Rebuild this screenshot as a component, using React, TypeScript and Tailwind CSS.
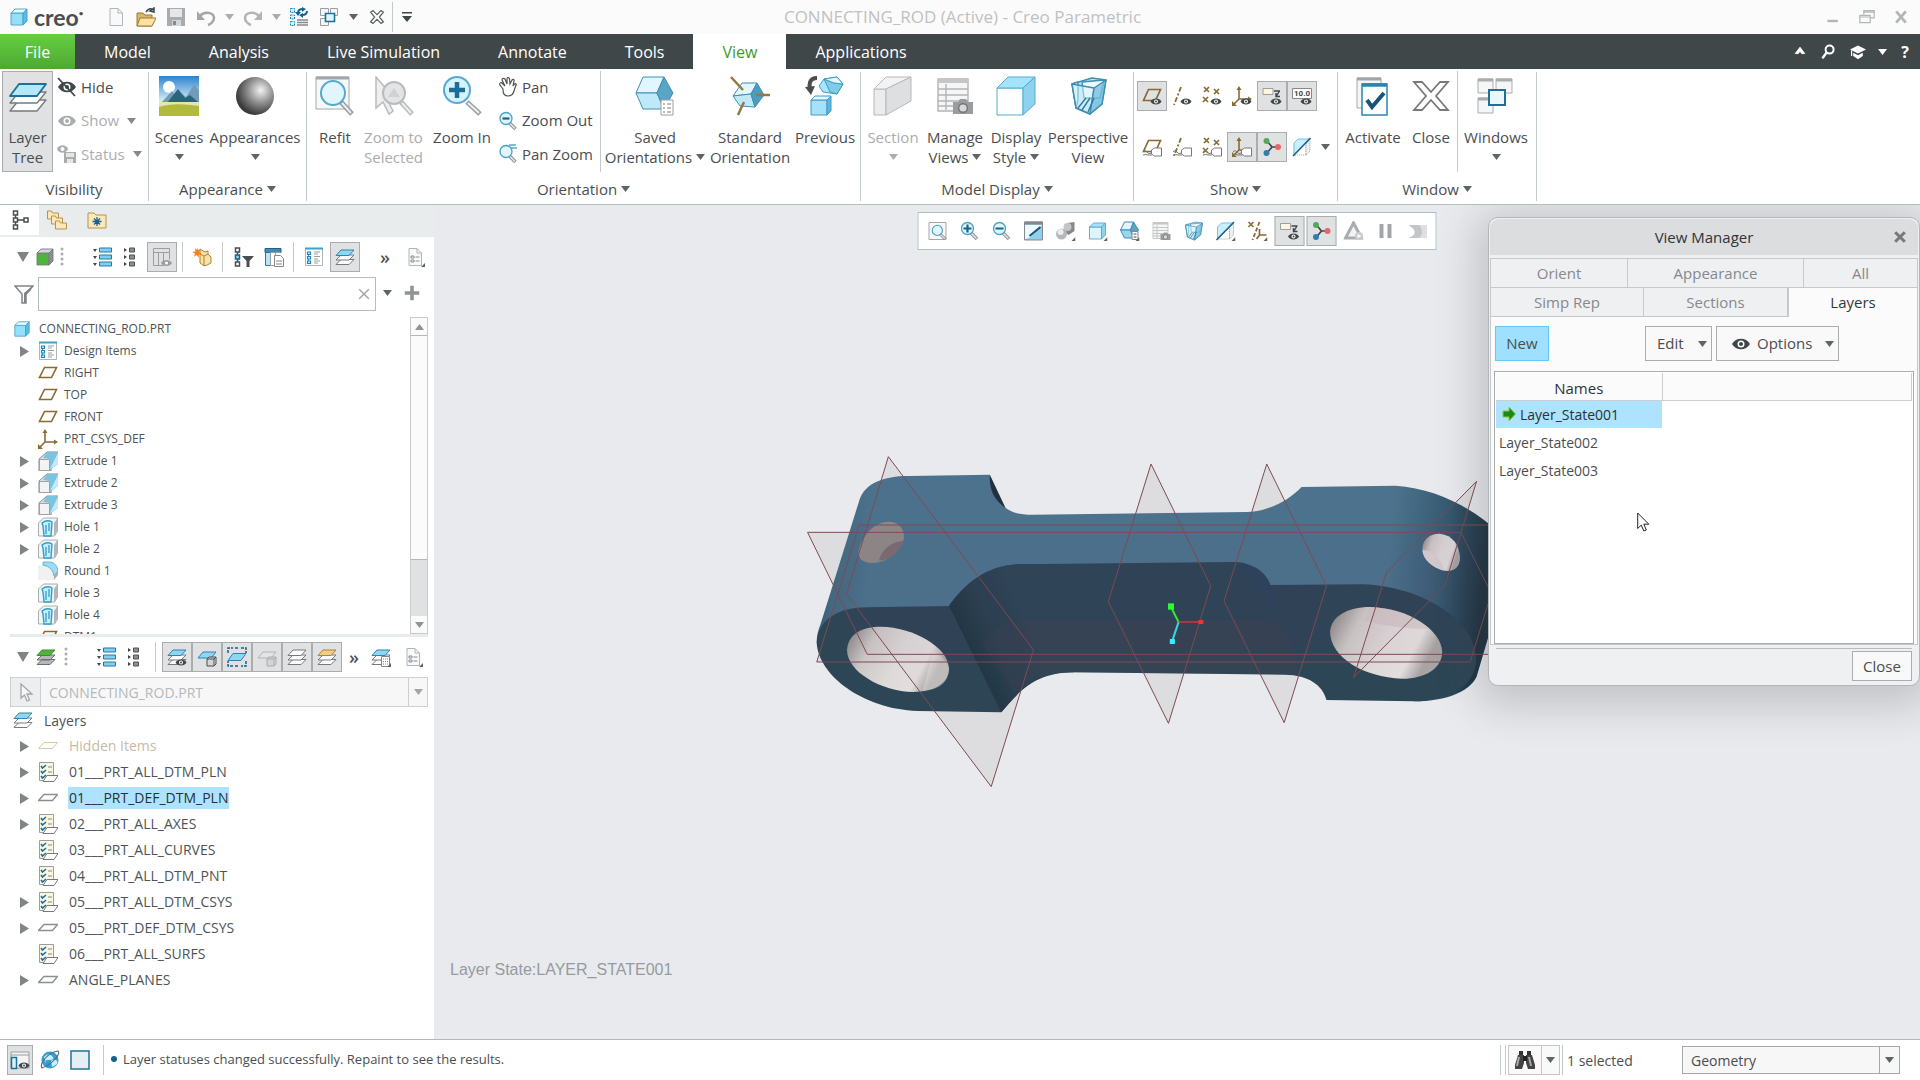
import React, { useState } from 'react';

type IconProps = { children?: React.ReactNode; box?: number; size?: string };

const Svg: React.FC<IconProps> = ({ children, box = 20, size = 'size-5' }) => (
  <svg className={`${size} shrink-0`} viewBox={`0 0 ${box} ${box}`} fill="none" aria-hidden="true">
    {children}
  </svg>
);

const Big: React.FC<{ children: React.ReactNode }> = ({ children }) => (
  <Svg box={40} size="size-10">{children}</Svg>
);

const Caret: React.FC<{ className?: string }> = ({ className = 'text-[#5f6467]' }) => (
  <svg className={`inline-block h-[6px] w-[9px] shrink-0 ${className}`} viewBox="0 0 9 6" fill="currentColor" aria-hidden="true">
    <path d="M0 0h9L4.500 6z" />
  </svg>
);

const SEP = 'w-px shrink-0 bg-[#c3cacb]';
const BROWN = '#8a6a33';

/* ---------- glyph parts shared by several icons ---------- */

const EyePart = () => (
  <g>
    <path d="M8.500 15.500c2-4 9-4 11 0-2 4-9 4-11 0z" fill="#3f4749" />
    <circle cx="14" cy="15.500" r="2" fill="#fff" />
    <circle cx="14" cy="15.500" r="1" fill="#3f4749" />
  </g>
);
const TagPart = () => (
  <g>
    <path d="M9.500 13l3-2h7v8h-7l-3-2z" fill="#fff" stroke="#77797b" />
    <path d="M1 15q2-3 4 0t4 1M1 18q3-1 5 0h4" stroke="#77797b" />
  </g>
);
const PlanePart = () => <path d="M6.500 3.500h12l-5 11H1.500z" stroke={BROWN} strokeWidth="1.700" />;
const AxisPart = () => <path d="M9 1L2 19" stroke={BROWN} strokeWidth="1.800" strokeDasharray="5 2 2 2" />;
const PointsPart = () => (
  <path d="M2 1l5 5m0-5L2 6M12 3l5 5m0-5l-5 5M1 11l5 5m0-5l-5 5" stroke={BROWN} strokeWidth="1.700" />
);
const CsysPart = () => (
  <g>
    <path d="M7 2v11h11M7 13l-5 5" stroke={BROWN} strokeWidth="1.600" />
    <path d="M4.500 4L7 0l2.500 4zM16 10.500l4 2.500-4 2.500zM0 15v5h5z" fill={BROWN} />
  </g>
);
const LensPart: React.FC<{ sign?: string }> = ({ sign }) => (
  <g>
    <path d="M11 11.500l6.500 6.500" stroke="#8e9294" strokeWidth="3.500" />
    <path d="M11.500 12l5.500 5.500" stroke="#e5e7e8" strokeWidth="1.500" />
    <circle cx="8" cy="7.500" r="6" fill="#e1f5fd" stroke="#4ba0c8" strokeWidth="1.300" />
    {sign && <path d={sign} stroke="#17628d" strokeWidth="2.200" />}
  </g>
);
const CubePart: React.FC<{ front?: string; top?: string; side?: string; line?: string }> = ({
  front = '#bdeaff', top = '#e3f7ff', side = '#58bde3', line = '#4b9ec2',
}) => (
  <g stroke={line} strokeWidth="0.900" strokeLinejoin="round">
    <path d="M2 6h12v12H2z" fill={front} />
    <path d="M2 6l4-4h12l-4 4z" fill={top} />
    <path d="M14 6l4-4v12l-4 4z" fill={side} />
  </g>
);
const LayersPart: React.FC<{ top?: string; line?: string }> = ({ top = '#8fd6f5', line = '#2f84ad' }) => (
  <g strokeLinejoin="round">
    <path d="M6 12.500h13l-5 5H1z" fill="#fff" stroke="#77797b" />
    <path d="M6 8h13l-5 5H1z" fill="#fff" stroke="#77797b" />
    <path d="M6 3h13l-5 5.500H1z" fill={top} stroke={line} />
  </g>
);
const SheetPart = () => (
  <g>
    <path d="M4 1.500h8l4.500 4.500v12.500H4z" fill="#f7f9fa" stroke="#b1b4b6" />
    <path d="M12 1.500v4.500h4.500" stroke="#b1b4b6" />
  </g>
);
const TrioPart = () => (
  <g>
    <path d="M5 4l5 6-5 6M10 10h6" stroke="#3f4749" strokeWidth="1.700" />
    <circle cx="4.500" cy="4" r="3" fill="#55a858" />
    <circle cx="16" cy="10" r="3" fill="#e8656b" />
    <circle cx="4.500" cy="16" r="3" fill="#2f7fae" />
  </g>
);
const ClipPart = () => (
  <g>
    <path d="M2 6h12v12H2z" stroke="#9da1a3" strokeDasharray="1 1" />
    <path d="M14 6l4-4v12l-4 4z" fill="#eceeef" stroke="#9da1a3" strokeDasharray="1 1" />
    <path d="M2 6l4-4h12L2 18z" fill="#c9effd" stroke="#74c4e6" />
    <path d="M1 19L18.500 1" stroke="#1b6089" strokeWidth="1.600" />
  </g>
);
const AnnotPart = () => (
  <g>
    <path d="M1 2.500h10v6H1z" fill="#fdf6df" stroke="#9b9fa1" />
    <path d="M12 5h6M17.500 5l-3 5M14 7v3.500h4" stroke="#3f4749" strokeWidth="1.400" />
  </g>
);
const TableCamPart = () => (
  <g>
    <path d="M1.500 1.500h15v16h-15z" fill="#f6f6f6" stroke="#b1b4b6" strokeWidth="0.700" />
    <path d="M1.500 1.500h15v2h-15z" fill="#c3c5c7" />
    <path d="M1.500 6.500h15M1.500 9.500h15M1.500 12.500h15M1.500 15h15M5.500 4v13" stroke="#b1b4b6" strokeWidth="0.700" />
    <path d="M9 13h2.500l1-1.500h3l1 1.500H19v6H9z" fill="#9a9d9f" />
    <circle cx="14" cy="16" r="2.200" fill="#d6d8d9" stroke="#77797b" strokeWidth="0.800" />
  </g>
);
const PerspPart = () => (
  <g stroke="#3f8fb5" strokeLinejoin="round" strokeWidth="0.700">
    <path d="M2 4l10-3 7 1-2 12-6 5-7-3z" fill="#bfe6f5" />
    <path d="M2 4l3-1v9l-1 4z" fill="#d8f2fb" />
    <path d="M7 3l11-1-2 9H8z" fill="#eef9fd" />
    <path d="M2 4l11 2-2 13-7-3z" fill="#d8f2fb" fillOpacity=".5" />
    <path d="M13 6l6-4-2 12-6 5z" fill="#79bedd" fillOpacity=".8" />
    <path d="M5 16l4-5M7 17l4-6M10 18l3-7" stroke="#2f7ba0" />
  </g>
);
const BlueList = () => (
  <Svg>
    {[1, 8, 15].map(y => (
      <g key={y}>
        <path d={`M1 ${y + 1}h4l-2 3z`} fill="#3f4749" />
        <path d={`M7.500 ${y}h12v4h-12z`} fill="#7fd0f3" stroke="#27789f" />
      </g>
    ))}
  </Svg>
);
const GreyList = () => (
  <Svg>
    {[1, 8, 15].map(y => (
      <g key={y}>
        <path d={`M4 ${y}l3 2-3 2z`} fill="#3f4749" />
        <path d={`M9.500 ${y}h5v4h-5z`} fill="#8c9092" stroke="#4d5254" />
      </g>
    ))}
  </Svg>
);
const ItemListPart = () => (
  <g>
    <path d="M1.500 1.500h17v17h-17z" fill="#fff" stroke="#b1b4b6" />
    <path d="M1 1.500h18" stroke="#3f9fcd" strokeWidth="2" />
    <path d="M4.500 5v11" stroke="#2f94c9" />
    <path d="M3.500 5h3v2.500h-3zM3.500 9.500h3V12h-3zM3.500 14h3v2.500h-3z" fill="#d4f1ff" stroke="#1a86c0" strokeWidth="1.200" />
    <path d="M10 5h6M10 7h4M10 9.500h6M10 12h4M10 14h6M10 16h4" stroke="#9a9ea0" />
  </g>
);
const Dots = () => (
  <svg className="h-5 w-[14px]" viewBox="0 0 14 20" fill="#a9adaf" aria-hidden="true">
    <circle cx="7" cy="2" r="1.500" /><circle cx="7" cy="7" r="1.500" /><circle cx="7" cy="12" r="1.500" /><circle cx="7" cy="17" r="1.500" />
  </svg>
);
const EyeIcon: React.FC<{ color?: string; slashed?: boolean }> = ({ color = '#3f4749', slashed }) => (
  <Svg>
    <path d="M1 10c4-7 14-7 18 0-4 7-14 7-18 0z" fill={color} />
    <circle cx="10" cy="10" r="3.500" fill="#fff" />
    <circle cx="10" cy="10" r="2" fill={color} />
    {slashed && <path d="M1 1l17 18" stroke="#3f4749" strokeWidth="1.800" />}
  </Svg>
);
const Corner = () => <path d="M20 16v4h-4z" fill="#5f6467" />;
const WindowsPart = () => (
  <g stroke="#9a9ea0">
    <path d="M1.500 1.500h8v7h-8zM11.500 1.500h7v7h-7zM1.500 11.500h8v7h-8z" fill="#f5f6f7" />
    <path d="M6.500 6.500h9v8h-9z" fill="#e2f5fd" stroke="#1f7099" strokeWidth="1.600" />
  </g>
);

/* ---------- buttons ---------- */

interface ToolProps {
  label: string;
  children: React.ReactNode;
  active?: boolean;
  width?: string;
}

const Tool: React.FC<ToolProps> = ({ label, children, active, width = 'w-[30px]' }) => (
  <button
    type="button"
    aria-label={label}
    aria-pressed={active}
    className={`flex h-[30px] shrink-0 items-center justify-center ${width} ${active ? 'border border-[#a9adaf] bg-[#dfe1e3]' : ''}`}
  >
    {children}
  </button>
);

interface RibbonButtonProps {
  icon: React.ReactNode;
  lines: string[];
  width: string;
  caret?: boolean;
  disabled?: boolean;
  active?: boolean;
}

const RibbonButton: React.FC<RibbonButtonProps> = ({ icon, lines, width, caret, disabled, active }) => (
  <button
    type="button"
    disabled={disabled}
    className={`flex shrink-0 flex-col items-center border pt-1 leading-5 whitespace-nowrap ${width} ${active ? 'border-[#a9adaf] bg-[#dfe1e3]' : 'border-transparent'} ${disabled ? 'text-[#aaadaf]' : ''}`}
  >
    <span className="mb-[11px]">{icon}</span>
    <span>{lines[0]}</span>
    <span className="flex h-5 items-center gap-1">
      {lines[1]}
      {caret && <Caret className={disabled ? 'text-[#aaadaf]' : undefined} />}
    </span>
  </button>
);

const SmallRibbonButton: React.FC<{ icon: React.ReactNode; label: string; caret?: boolean; disabled?: boolean }> = ({ icon, label, caret, disabled }) => (
  <button type="button" disabled={disabled} className={`flex h-[34px] items-center gap-1 pb-0.5 whitespace-nowrap ${disabled ? 'text-[#aaadaf]' : ''}`}>
    {icon}
    <span>{label}</span>
    {caret && <Caret className="ml-1 text-[#85898b]" />}
  </button>
);

const RibbonGroup: React.FC<{ label: string; caret?: boolean; width: string; children: React.ReactNode }> = ({ label, caret, width, children }) => (
  <>
    <section aria-label={label} className={`flex shrink-0 flex-col pt-[2px] ${width}`}>
      <div className="flex h-[101px] px-[2px]">{children}</div>
      <div className="flex h-8 items-center justify-center gap-1 pt-0.5">
        {label}
        {caret && <Caret />}
      </div>
    </section>
    <div className={`${SEP} my-[3px]`} />
  </>
);

/* ---------- title bar and tabs ---------- */

const TitleBar = () => (
  <header className="flex h-[34px] shrink-0 items-center bg-[#fbfbfb]">
    <div className="flex flex-1 items-center pl-[9px]">
      <Svg><CubePart front="#93e0fb" /></Svg>
      <span className="ml-[5px] flex w-[67px] font-[Lato,sans-serif] text-[23px] leading-7 font-bold text-[#4a4e50]">
        creo<span className="mt-1 text-[8px] leading-3">•</span>
      </span>
      <Tool label="New"><Svg><SheetPart /></Svg></Tool>
      <Tool label="Open">
        <Svg>
          <path d="M1 6h6l2 2h7v11H1z" fill="#dcb566" stroke="#a07b34" />
          <path d="M4 11h16l-4 8H1z" fill="#fbe1a3" stroke="#a07b34" />
          <path d="M10 5q3-5 7-2M14 4l4 1V1z" stroke="#3f4749" strokeWidth="1.500" />
        </Svg>
      </Tool>
      <Tool label="Save">
        <Svg>
          <path d="M1 1h18v18H1z" fill="#a9acae" />
          <path d="M4 2h12v8H4z" fill="#e6e7e8" />
          <path d="M6 13h9v6H6z" fill="#d3d5d6" />
          <path d="M7 14h3v4H7z" fill="#85898b" />
        </Svg>
      </Tool>
      <Tool label="Undo">
        <Svg>
          <path d="M4 9c4-5 14-4 14 2 0 3-3 6-6 7" stroke="#a3a6a8" strokeWidth="2.500" />
          <path d="M1 4v9h8z" fill="#a3a6a8" />
        </Svg>
      </Tool>
      <Tool label="Undo list" width="w-4"><Caret className="text-[#a9adaf]" /></Tool>
      <Tool label="Redo" width="w-8">
        <Svg>
          <path d="M16 9C12 4 2 5 2 11c0 3 3 6 6 7" stroke="#b1b4b6" strokeWidth="2.500" />
          <path d="M19 4v9h-8z" fill="#b1b4b6" />
        </Svg>
      </Tool>
      <Tool label="Redo list" width="w-[15px]"><Caret className="text-[#a9adaf]" /></Tool>
      <Tool label="Regenerate">
        <Svg>
          <path d="M1.500 1.500h4v4h-4zM1.500 8h4v4h-4zM1.500 14.500h4v4h-4z" fill="#d4f1ff" stroke="#1a86c0" strokeDasharray="2 1" />
          <path d="M9 6q0-4 5-4M18 4q0 4-5 4" stroke="#17628d" strokeWidth="2" />
          <path d="M13 0l4 2-4 3zM14 6l-4 2 4 3zM6 5h6l-3 4z" fill="#17628d" />
          <path d="M8 13h11M8 15.500h11M8 18h11" stroke="#85898b" strokeWidth="1.300" />
        </Svg>
      </Tool>
      <Tool label="Windows"><Svg><WindowsPart /></Svg></Tool>
      <Tool label="Windows list" width="w-[18px]"><Caret /></Tool>
      <Tool label="Close window">
        <Svg size="size-4">
          <path d="M2 4l3-2 5 5 5-5 3 2-5 6 5 6-3 2-5-5-5 5-3-2 5-6z" stroke="#5f6467" strokeWidth="1.600" fill="#fff" />
        </Svg>
      </Tool>
      <div className={`${SEP} h-[30px]`} />
      <Tool label="Customize toolbar" width="w-7">
        <svg className="h-[10px] w-[10px]" viewBox="0 0 10 10" fill="#3f4749"><path d="M0 0h10v1.500H0zM0 4h10l-5 6z" /></svg>
      </Tool>
    </div>
    <h1 className="text-[17px] text-[#bfc1c2]">CONNECTING_ROD (Active) - Creo Parametric</h1>
    <div className="flex flex-1 items-center justify-end gap-1 pr-1 text-[#b3b6b8]">
      <Tool label="Minimize"><Svg size="size-4"><path d="M3 15h13" stroke="currentColor" strokeWidth="3" /></Svg></Tool>
      <Tool label="Restore">
        <Svg size="size-4"><path d="M6 7V2h13v9h-5M1 8h13v9H1zM1 10h13M6 4h13" stroke="currentColor" strokeWidth="1.500" /></Svg>
      </Tool>
      <Tool label="Exit"><Svg size="size-4"><path d="M4 3l12 14M16 3L4 17" stroke="currentColor" strokeWidth="3.500" /></Svg></Tool>
    </div>
  </header>
);

const tabs = ['Model', 'Analysis', 'Live Simulation', 'Annotate', 'Tools', 'View', 'Applications'];

const MenuBar = () => {
  const [current, setCurrent] = useState('View');
  return (
    <nav className="flex h-[35px] shrink-0 bg-[#3f4749] text-[16px] text-white">
      <button type="button" className="w-[75px] bg-linear-to-b from-[#64cf40] to-[#4ea834]">File</button>
      {tabs.map(tab => (
        <button
          key={tab}
          type="button"
          onClick={() => setCurrent(tab)}
          className={`px-[29px] whitespace-nowrap ${current === tab ? 'bg-white text-[#3f9a2b]' : ''}`}
        >
          {tab}
        </button>
      ))}
      <div className="ml-auto flex items-center">
        <Tool label="Minimize ribbon" width="w-7"><Svg size="size-4"><path d="M4 12l6-8 6 8h-4l-2-3-2 3z" fill="#fff" stroke="#fff" /></Svg></Tool>
        <Tool label="Search" width="w-7">
          <Svg size="size-4"><circle cx="12" cy="7" r="5" stroke="#fff" strokeWidth="2.500" /><path d="M8 11l-5 7" stroke="#fff" strokeWidth="3" /></Svg>
        </Tool>
        <Tool label="Learning" width="w-8">
          <Svg size="size-4">
            <path d="M0 7l10-5 10 5-10 5z" fill="#fff" />
            <path d="M4 11l6 3 6-3v4l-6 4-6-4z" fill="#fff" /><path d="M2 8v7" stroke="#fff" strokeWidth="1.500" />
          </Svg>
        </Tool>
        <Tool label="Learning list" width="w-4"><Caret className="text-white" /></Tool>
        <Tool label="Help"><b>?</b></Tool>
      </div>
    </nav>
  );
};

/* ---------- ribbon ---------- */

const Ribbon = () => (
  <div className="flex h-[136px] shrink-0 overflow-hidden border-b border-[#b0bfbf] bg-white text-[15px] text-[#4a4e50]">
    <RibbonGroup label="Visibility" width="w-[148px]">
      <RibbonButton
        active
        width="w-[51px]"
        lines={['Layer', 'Tree']}
        icon={<Big>
          <g strokeLinejoin="round">
            <path d="M11 24h27l-9 11H2z" fill="#fff" stroke="#77797b" strokeWidth="1.300" />
            <path d="M11 16h27l-9 11H2z" fill="#fff" stroke="#77797b" strokeWidth="1.300" />
            <path d="M11 8h27l-9 12H2z" fill="#b7e6f9" stroke="#1f7099" strokeWidth="1.800" />
          </g>
        </Big>}
      />
      <div className="ml-1 flex flex-col">
        <SmallRibbonButton label="Hide" icon={<EyeIcon slashed />} />
        <SmallRibbonButton label="Show" caret disabled icon={<EyeIcon color="#a9adaf" />} />
        <SmallRibbonButton
          label="Status"
          caret
          disabled
          icon={<Svg>
            <path d="M0 5c2-5 9-5 11 0-2 5-9 5-11 0z" fill="#a9adaf" /><circle cx="5.500" cy="5" r="2" fill="#fff" />
            <path d="M7 8h12v11H7z" fill="#a9adaf" /><path d="M9 9h8v4H9zM10 15h6v4h-6z" fill="#e5e6e7" />
          </Svg>}
        />
      </div>
    </RibbonGroup>

    <RibbonGroup label="Appearance" caret width="w-[157px]">
      <RibbonButton
        caret
        width="w-[56px]"
        lines={['Scenes']}
        icon={<Big>
          <defs>
            <linearGradient id="sky" x2="0" y2="1"><stop stopColor="#2d83cf" /><stop offset=".6" stopColor="#cfe9f5" /></linearGradient>
          </defs>
          <path d="M0 0h40v40H0z" fill="url(#sky)" />
          <circle cx="10" cy="11" r="6" fill="#fff" />
          <path d="M2 27l11-12 4 5 4-4 6 5 8-12 5 5v14z" fill="#6f9cb6" />
          <path d="M8 27l11-14 7 9 5-3 9 8z" fill="#2d637f" />
          <path d="M0 26h40v14H0z" fill="#e4e5b0" />
          <path d="M0 31q15-5 40-1v10H0z" fill="#b1ba3c" />
        </Big>}
      />
      <RibbonButton
        caret
        width="w-[96px]"
        lines={['Appearances']}
        icon={<Big>
          <defs>
            <radialGradient id="ball" cx=".65" cy=".35" r=".65"><stop stopColor="#f3f3f3" /><stop offset=".5" stopColor="#929292" /><stop offset="1" stopColor="#3a3a3a" /></radialGradient>
          </defs>
          <circle cx="20" cy="20" r="19" fill="url(#ball)" />
        </Big>}
      />
    </RibbonGroup>

    <RibbonGroup label="Orientation" caret width="w-[553px]">
      <RibbonButton
        width="w-[52px]"
        lines={['Refit']}
        icon={<Big>
          <path d="M1 1h33v32H1z" fill="#f7f8f9" stroke="#a3a6a8" /><path d="M1 2h33" stroke="#a3a6a8" strokeWidth="3" />
          <path d="M26 26l11 12" stroke="#999da0" strokeWidth="5" /><path d="M27 27l9 10" stroke="#eceeef" strokeWidth="2" />
          <circle cx="18" cy="17" r="12" fill="#e1f5fd" stroke="#57aacf" strokeWidth="2" />
        </Big>}
      />
      <RibbonButton
        disabled
        width="w-[65px]"
        lines={['Zoom to', 'Selected']}
        icon={<Big>
          <path d="M2 1v31l7-6 6 12 4-3-5-10h9z" fill="#eee" stroke="#bbb" strokeWidth="1.500" />
          <path d="M27 26l11 12" stroke="#b9bbbd" strokeWidth="5" /><path d="M28 27l9 10" stroke="#eceeef" strokeWidth="2" />
          <circle cx="20" cy="17" r="11" fill="#e3e4e5" stroke="#b9bbbd" strokeWidth="2" /><path d="M14 21l6-9 6 9z" fill="#cfd1d2" />
        </Big>}
      />
      <RibbonButton
        width="w-[72px]"
        lines={['Zoom In']}
        icon={<Big>
          <path d="M25 26l13 12" stroke="#999da0" strokeWidth="5" /><path d="M26 27l11 10" stroke="#eceeef" strokeWidth="2" />
          <circle cx="15" cy="14" r="13" fill="#d8f2fc" stroke="#57aacf" strokeWidth="2" />
          <path d="M15 6v16M7 14h16" stroke="#1b6c98" strokeWidth="4.500" />
        </Big>}
      />
      <div className="flex flex-1 flex-col">
        <SmallRibbonButton
          label="Pan"
          icon={<Svg>
            <path d="M5 12L2 8c-1-2 1-3 2-2l3 3-3-6c0-2 2-2 3-1l2 5V2c0-2 2-2 2.500 0l.5 5 2-4c1-1 2.500-.5 2 1l-1 5 1.500-2c1-1 2 0 1.500 1l-2 6c-1 4-3 5-6 5-4 0-5-3-5-6z" fill="#fff" stroke="#4d5254" strokeWidth="1.200" />
          </Svg>}
        />
        <SmallRibbonButton label="Zoom Out" icon={<Svg><LensPart sign="M4.500 7.500h7" /></Svg>} />
        <SmallRibbonButton label="Pan Zoom" icon={<Svg><LensPart /><path d="M11 1h7M13 4h6" stroke="#57aacf" strokeWidth="1.500" /></Svg>} />
      </div>
      <div className={`${SEP} mx-px`} />
      <RibbonButton
        caret
        width="w-[106px]"
        lines={['Saved', 'Orientations']}
        icon={<Big>
          <g stroke="#3f8fb5" strokeLinejoin="round">
            <path d="M8 1h21L22 17H1z" fill="#e1f6fe" /><path d="M1 17h21l7 16H8z" fill="#bfe9f9" /><path d="M29 1l9 16-9 16-7-16z" fill="#5aa4c6" />
          </g>
          <path d="M26 24h12v15H26z" fill="#fff" stroke="#9a9ea0" /><path d="M28 28h2M32 28h4M28 32h2M32 32h4M28 36h2M32 36h4" stroke="#77797b" />
        </Big>}
      />
      <RibbonButton
        width="w-[84px]"
        lines={['Standard', 'Orientation']}
        icon={<Big>
          <g stroke="#3f8fb5" strokeLinejoin="round">
            <path d="M12 7h15l-6 11-18 2z" fill="#e1f6fe" /><path d="M3 20l18-2 4 13-15-1z" fill="#bfe9f9" /><path d="M27 7l7 12-9 12-4-13z" fill="#4c9bc0" />
          </g>
          <path d="M1 1l12 13M26 19h14M14 26L8 39" stroke="#9a783b" strokeWidth="2.500" />
        </Big>}
      />
      <RibbonButton
        width="w-[66px]"
        lines={['Previous']}
        icon={<Big>
          <path d="M12 2C4 2 4 9 5 13" stroke="#4a4e50" strokeWidth="4" /><path d="M0 11l10-1-4 9z" fill="#4a4e50" />
          <g stroke="#3f9cc4" strokeLinejoin="round">
            <path d="M19 3l13-2 6 7-6 10-14-2-4-6z" fill="#aee4fa" /><path d="M19 3l10 4 9 1-6 10-7-2z" fill="#7fcbe8" /><path d="M19 3l13-2 6 7-9-1z" fill="#e1f6fe" />
            <path d="M6 24h16v15H6z" fill="#a5e1fa" /><path d="M6 24l4-4h16l-4 4z" fill="#e1f6fe" /><path d="M22 24l4-4v15l-4 4z" fill="#5db7dc" />
          </g>
        </Big>}
      />
    </RibbonGroup>

    <RibbonGroup label="Model Display" caret width="w-[272px]">
      <RibbonButton
        caret
        disabled
        width="w-[60px]"
        lines={['Section']}
        icon={<Big>
          <g stroke="#b5b8ba" strokeLinejoin="round">
            <path d="M1 13h12v26H1z" fill="#ececec" /><path d="M1 13L13 1h25L13 13z" fill="#f3f3f3" /><path d="M13 13L38 1v24L13 39z" fill="#dedfe0" />
          </g>
        </Big>}
      />
      <RibbonButton
        caret
        width="w-[64px]"
        lines={['Manage', 'Views']}
        icon={<Svg size="size-10"><TableCamPart /></Svg>}
      />
      <RibbonButton
        caret
        width="w-[58px]"
        lines={['Display', 'Style']}
        icon={<Big>
          <g stroke="#57aacf" strokeLinejoin="round">
            <path d="M1 12h26v27H1z" fill="#fff" /><path d="M1 12L12 1h27L27 12z" fill="#a5e3fb" /><path d="M27 12L39 1v27L27 39z" fill="#8dd3f0" />
          </g>
        </Big>}
      />
      <RibbonButton width="w-[86px]" lines={['Perspective', 'View']} icon={<Svg size="size-10"><PerspPart /></Svg>} />
    </RibbonGroup>

    <RibbonGroup label="Show" caret width="w-[203px]">
      <div className="flex flex-col gap-[21px] pt-[10px] pl-px">
        <div className="flex">
          <Tool label="Plane display" active><Svg><PlanePart /><EyePart /></Svg></Tool>
          <Tool label="Axis display"><Svg><AxisPart /><EyePart /></Svg></Tool>
          <Tool label="Point display"><Svg><PointsPart /><EyePart /></Svg></Tool>
          <Tool label="Csys display"><Svg><CsysPart /><EyePart /></Svg></Tool>
          <Tool label="Annotation display" active><Svg><AnnotPart /><EyePart /></Svg></Tool>
          <Tool label="Dimension display" active>
            <Svg>
              <path d="M.5 2.500h19v10H.5z" fill="#fff" stroke="#85898b" />
              <text x="2" y="10" fontSize="8" fontWeight="bold" fill="#3f4749" fontFamily="Roboto, sans-serif">10.0</text>
              <EyePart />
            </Svg>
          </Tool>
        </div>
        <div className="flex">
          <Tool label="Plane tags"><Svg><PlanePart /><TagPart /></Svg></Tool>
          <Tool label="Axis tags"><Svg><AxisPart /><TagPart /></Svg></Tool>
          <Tool label="Point tags"><Svg><PointsPart /><TagPart /></Svg></Tool>
          <Tool label="Csys tags" active><Svg><CsysPart /><TagPart /></Svg></Tool>
          <Tool label="Spin center" active><Svg><TrioPart /></Svg></Tool>
          <Tool label="Clipping"><Svg><ClipPart /></Svg></Tool>
          <Tool label="More display options" width="w-4"><Caret /></Tool>
        </div>
      </div>
    </RibbonGroup>

    <RibbonGroup label="Window" caret width="w-[198px]">
      <RibbonButton
        width="w-[66px]"
        lines={['Activate']}
        icon={<Big>
          <path d="M4 2h24v30H4z" fill="#f5f6f7" stroke="#a3a6a8" /><path d="M4 3h24" stroke="#a3a6a8" strokeWidth="3" />
          <path d="M9 8h25v31H9z" fill="#fff" stroke="#2f84ad" strokeWidth="1.500" /><path d="M9 9h25" stroke="#2f84ad" strokeWidth="3.500" />
          <path d="M14 24l5 7 12-14" stroke="#17547b" strokeWidth="4" />
        </Big>}
      />
      <RibbonButton
        width="w-[50px]"
        lines={['Close']}
        icon={<Big>
          <path d="M3 6h8l9 10 9-10h8L25 20l12 14h-8l-9-10-9 10H3l12-14z" fill="#fff" stroke="#77797b" strokeWidth="1.800" />
        </Big>}
      />
      <div className={`${SEP} ml-px`} />
      <RibbonButton
        caret
        width="w-[76px]"
        lines={['Windows']}
        icon={<Big>
          <g fill="#f5f6f7" stroke="#a9adaf">
            <path d="M2 3h15v14H2zM20 3h16v14H20zM2 22h15v15H2z" />
            <path d="M2 4h15M20 4h16M2 23h15" strokeWidth="3" />
          </g>
          <path d="M13 14h16v15H13z" fill="#e9f7fc" stroke="#1f7099" strokeWidth="2" />
        </Big>}
      />
    </RibbonGroup>
  </div>
);

/* ---------- navigator ---------- */

const Arrow = () => (
  <svg className="h-[11px] w-[9px]" viewBox="0 0 9 11" fill="#808487" aria-hidden="true"><path d="M0 0l9 5.500L0 11z" /></svg>
);

const planeIcon = <Svg><path d="M6.500 4.500h12l-5 10H1.500z" stroke={BROWN} strokeWidth="1.600" /></Svg>;
const extrudeIcon = (
  <Svg>
    <path d="M1 8l8-7h11l-7 8v11H1z" fill="#dfe3e5" stroke="#85898b" />
    <path d="M5 7l4-6h11v12l-8 6V8z" fill="#7cc3e0" /><path d="M12 18l8-16v11z" fill="#c5e9f6" />
    <path d="M1.500 8.500h10v11h-10z" fill="#f3f3f4" stroke="#a0a3a5" />
  </Svg>
);
const holeIcon = (
  <Svg>
    <path d="M.5 6l5-5h14v13l-3 5H.5z" fill="#f3f4f5" stroke="#a9adaf" />
    <path d="M16 6l3.500-5v13L16 19z" fill="#b3b7b9" />
    <path d="M4 6q5-4 10-1l-1 14H6L5 9z" fill="#c5edfb" stroke="#2f9fce" strokeWidth="1.400" />
    <path d="M8 8v9M11 6v8" stroke="#2f9fce" strokeWidth="1.300" />
  </Svg>
);

interface TreeItem { name: string; icon: React.ReactNode; expandable?: boolean; muted?: boolean; selected?: boolean }

const modelItems: TreeItem[] = [
  { name: 'Design Items', icon: <Svg><ItemListPart /></Svg>, expandable: true },
  { name: 'RIGHT', icon: planeIcon },
  { name: 'TOP', icon: planeIcon },
  { name: 'FRONT', icon: planeIcon },
  { name: 'PRT_CSYS_DEF', icon: <Svg><CsysPart /></Svg> },
  { name: 'Extrude 1', icon: extrudeIcon, expandable: true },
  { name: 'Extrude 2', icon: extrudeIcon, expandable: true },
  { name: 'Extrude 3', icon: extrudeIcon, expandable: true },
  { name: 'Hole 1', icon: holeIcon, expandable: true },
  { name: 'Hole 2', icon: holeIcon, expandable: true },
  {
    name: 'Round 1',
    icon: <Svg><path d="M0 4h9c6 1 7 7 7 15H0z" fill="#f0f1f2" /><path d="M5 1h7q7 1 8 9l-4 5Q15 6 5 4z" fill="#9adcf5" stroke="#62b7da" /><path d="M16 14l4-4v4l-4 5z" fill="#a9adaf" /></Svg>,
  },
  { name: 'Hole 3', icon: holeIcon },
  { name: 'Hole 4', icon: holeIcon },
  { name: 'DTM1', icon: planeIcon },
];

const ruleIcon = (
  <Svg>
    <path d="M1.500 .5h14v18h-14z" fill="#fdf6df" stroke="#9a9ea0" />
    <path d="M3 4l1.500 2L8 3M3 9l1.500 2L8 8M3 14l1.500 2L8 13" stroke="#1a6fa0" strokeWidth="1.600" />
    <path d="M10 5h4M10 10h4" stroke="#a9adaf" strokeWidth="1.300" />
    <path d="M9 13.500h11l-4 6H5z" fill="#fff" stroke="#77797b" />
  </Svg>
);
const layerIcon = <Svg><path d="M6 6.500h13.500l-5 6H.5z" fill="#fff" stroke="#8a8e90" strokeWidth="1.300" /></Svg>;

const layerItems: TreeItem[] = [
  { name: 'Hidden Items', icon: <Svg><path d="M6 6.500h13.500l-5 6H.5z" fill="#fffdf6" stroke="#d0c8b4" /></Svg>, expandable: true, muted: true },
  { name: '01___PRT_ALL_DTM_PLN', icon: ruleIcon, expandable: true },
  { name: '01___PRT_DEF_DTM_PLN', icon: layerIcon, expandable: true, selected: true },
  { name: '02___PRT_ALL_AXES', icon: ruleIcon, expandable: true },
  { name: '03___PRT_ALL_CURVES', icon: ruleIcon },
  { name: '04___PRT_ALL_DTM_PNT', icon: ruleIcon },
  { name: '05___PRT_ALL_DTM_CSYS', icon: ruleIcon, expandable: true },
  { name: '05___PRT_DEF_DTM_CSYS', icon: layerIcon, expandable: true },
  { name: '06___PRT_ALL_SURFS', icon: ruleIcon },
  { name: 'ANGLE_PLANES', icon: layerIcon, expandable: true },
];

const NavTabs = () => (
  <div className="flex h-8 shrink-0 bg-[#e8ecec]">
    <Tool label="Model Tree tab" width="h-8 w-[39px] bg-white pl-0.5">
      <Svg><path d="M2.500 1h4v4h-4zM2.500 8h4v4h-4zM2.500 15h4v4h-4zM13 8h4v4h-4zM4.500 5v3M4.500 12v3M6.500 10H13" stroke="#4a4e50" strokeWidth="1.500" /></Svg>
    </Tool>
    <Tool label="Folder Browser tab" width="h-8 w-9">
      <Svg>
        {[[0, 1], [4, 6], [8, 11]].map(([x, y]) => (
          <path key={x} d={`M${x + 0.5} ${y}h4l1 2h6v6h-11z`} fill="#fbe7b8" stroke="#b8924a" />
        ))}
      </Svg>
    </Tool>
    <Tool label="Favorites tab" width="ml-1 h-8 w-9">
      <Svg>
        <path d="M1 3h6l2 2h10v13H1z" fill="#fbe7b8" stroke="#b8924a" />
        <path d="M10 7v9M5.500 11.500h9M7 8.500l6 6M13 8.500l-6 6" stroke="#17628d" strokeWidth="1.300" />
      </Svg>
    </Tool>
  </div>
);

const TreeRow: React.FC<{ item: TreeItem; tall?: boolean }> = ({ item, tall }) => (
  <li className={`flex items-center pl-[15px] ${tall ? 'h-[26px]' : 'h-[22px]'}`}>
    <span className="flex w-[23px] pl-[5px]">
      {item.expandable && <button type="button" aria-label={`Expand ${item.name}`}><Arrow /></button>}
    </span>
    {item.icon}
    <span
      className={`${tall ? 'ml-[10px] px-px leading-[22px]' : 'ml-[6px]'} ${item.muted ? 'text-[#c6bba6]' : ''} ${item.selected ? 'bg-[#ade3ff] text-[#2b3033]' : ''}`}
    >
      {item.name}
    </span>
  </li>
);

const docMenuIcon = (
  <Svg><SheetPart /><path d="M6 9h3v2H6zM6 13h3v2H6zM10.500 10h4M10.500 14h4" stroke="#8a8e90" /><Corner /></Svg>
);

const Navigator = () => {
  const [filter, setFilter] = useState('');
  return (
    <aside className="flex w-[434px] shrink-0 flex-col bg-white text-[#4f5355]">
      <NavTabs />
      <div className="flex h-10 shrink-0 items-center pl-4">
        <Tool label="Tree menu" width="w-[14px]"><svg className="h-[10px] w-3" viewBox="0 0 12 10" fill="#808487"><path d="M0 0h12L6 10z" /></svg></Tool>
        <Tool label="Model" width="ml-[5px] w-5"><Svg><CubePart front="#4fb43a" top="#d5d8d9" side="#8a8e90" line="#777b7d" /></Svg></Tool>
        <Dots />
        <Tool label="Expand all" width="ml-[18px] w-[30px]"><BlueList /></Tool>
        <Tool label="Collapse all" width="w-[26px]"><GreyList /></Tool>
        <Tool label="Tree columns" active width="ml-1 w-[30px]">
          <Svg>
            <path d="M1.500 1.500h16v4h-16zM1.500 5.500h5v13h-5zM6.500 5.500h5v13h-5zM11.500 5.500h6v7" stroke="#9a9ea0" />
            <path d="M9 16c2-4 9-4 11 0-2 4-9 4-11 0z" fill="#9a9ea0" /><circle cx="14.500" cy="16" r="1.500" fill="#fff" />
          </Svg>
        </Tool>
        <div className={`${SEP} ml-[5px] h-[30px]`} />
        <Tool label="Body" width="ml-1 w-[30px]">
          <Svg><path d="M8 2l5 3 3-1v3l3 3v6l-4 2-3 1-4-3z" fill="#fbe1a3" stroke="#a8853c" /><path d="M8 7l4 2v10M12 9l4-2" stroke="#a8853c" /><path d="M5 0l1 3 3-1-2 3 3 2-3 .5L6.500 11 5 8 2 9.500 3 6.500 0 5l3.500-.5L3 1l2 2z" fill="#f58220" /></Svg>
        </Tool>
        <div className={`${SEP} ml-[5px] h-[30px]`} />
        <Tool label="Tree filters" width="ml-[6px] w-[30px]">
          <Svg><path d="M1.500 1h4v4h-4zM1.500 15h4v4h-4zM3.500 5v10" stroke="#4a4e50" strokeWidth="1.500" /><path d="M1.500 8h4v4h-4z" fill="#8fd6f5" stroke="#17628d" strokeWidth="1.500" /><path d="M8 9h12l-4.500 5v6h-3v-6z" fill="#4a4e50" /></Svg>
        </Tool>
        <Tool label="Column settings">
          <Svg><path d="M1 1.500h16v4H1z" fill="#3b8db5" stroke="#27607d" /><path d="M1.500 5.500h5v13h-5z" fill="#b7e6f9" stroke="#27789f" /><path d="M6.500 5.500h5v13h-5zM11.500 5.500h5" stroke="#9a9ea0" /><path d="M10.500 8.500h6l3 3v8h-9z" fill="#fff" stroke="#85898b" /><path d="M12 14h6M12 17h6" stroke="#85898b" /></Svg>
        </Tool>
        <div className={`${SEP} ml-1 h-[30px]`} />
        <Tool label="Design items" width="ml-[5px] w-[30px]"><Svg><ItemListPart /></Svg></Tool>
        <Tool label="Layer tree" active width="ml-px w-[30px]"><Svg><LayersPart /></Svg></Tool>
        <Tool label="More tools" width="ml-[10px] w-[30px]"><span className="text-lg leading-5 font-semibold">»</span></Tool>
        <Tool label="Tree settings">{docMenuIcon}</Tool>
      </div>
      <div className="flex h-10 shrink-0 items-start">
        <Tool label="Filter" width="mt-[2px] w-[38px] pl-[10px]">
          <Svg><path d="M1 2h18l-7 8v9H8v-9z" fill="#fff" stroke="#808487" strokeWidth="1.500" /><path d="M10 9l7-6v3l-5 5v8h-2z" fill="#808487" /></Svg>
        </Tool>
        <div className="flex h-[34px] w-[338px] items-center border border-[#b0bfbf] pr-[3px]">
          <input
            type="text"
            aria-label="Search tree"
            value={filter}
            onChange={e => setFilter(e.target.value)}
            className="h-full min-w-0 flex-1 px-2 text-[13px] outline-none"
          />
          <button type="button" aria-label="Clear search" onClick={() => setFilter('')}>
            <Svg size="size-4"><path d="M4 4l12 12M16 4L4 16" stroke="#a0a3a5" strokeWidth="1.800" /></Svg>
          </button>
        </div>
        <Tool label="Search options" width="mt-px w-[22px]"><Caret /></Tool>
        <Tool label="Add filter" width="mt-px w-[28px]"><Svg size="size-[18px]"><path d="M10 2v16M2 10h16" stroke="#909496" strokeWidth="4" /></Svg></Tool>
      </div>
      <div className="flex h-[317px] shrink-0 overflow-hidden pr-[6px] text-[12px]">
        <ul className="flex-1 pt-px">
          <li className="flex h-[22px] items-center gap-2 pl-[13px]">
            <Svg size="size-[18px]"><CubePart front="#93e0fb" /></Svg>CONNECTING_ROD.PRT
          </li>
          {modelItems.map(item => <TreeRow key={item.name} item={item} />)}
        </ul>
        <div className="flex w-[18px] flex-col border border-[#c8cbcd] bg-[#dfe1e3]">
          <button type="button" aria-label="Scroll up" className="flex h-[17px] items-center justify-center bg-[#fbfbfb]"><Caret className="rotate-180 text-[#909496]" /></button>
          <div className="h-[225px] border-y border-[#b5b8ba] bg-[#fbfbfb]" />
          <button type="button" aria-label="Scroll down" className="mt-auto flex h-[17px] items-center justify-center bg-[#fbfbfb]"><Caret className="text-[#909496]" /></button>
        </div>
      </div>
      <div className="mr-[6px] ml-[10px] h-[3px] shrink-0 bg-[#e8ecec]" />
      <div className="flex h-10 shrink-0 items-center pl-4">
        <Tool label="Layer menu" width="w-[14px]"><svg className="h-[10px] w-3" viewBox="0 0 12 10" fill="#808487"><path d="M0 0h12L6 10z" /></svg></Tool>
        <Tool label="Layers" width="ml-[6px] w-5">
          <Svg>
            <path d="M6 12.500h13l-5 5H1zM6 8h13l-5 5H1z" fill="#b5b8ba" stroke="#6d7072" strokeLinejoin="round" />
            <path d="M6 3h13l-5 5.500H1z" fill="#4fb43a" stroke="#3d8f2c" strokeLinejoin="round" />
          </Svg>
        </Tool>
        <span className="ml-[3px] flex"><Dots /></span>
        <Tool label="Expand layers" width="ml-[18px] w-[30px]"><BlueList /></Tool>
        <Tool label="Collapse layers" width="w-[26px]"><GreyList /></Tool>
        <div className={`${SEP} ml-[8px] h-[30px]`} />
        <Tool label="Shown layers" active width="ml-[6px] w-[30px]"><Svg><LayersPart /><EyePart /></Svg></Tool>
        <Tool label="Solid layers" active>
          <Svg><path d="M6 5h13l-5 6H1z" fill="#8fd6f5" stroke="#2f84ad" /><path d="M10 12h7v7h-7zM10 12l2-2h7l-2 2M19 10v7l-2 2" fill="#d3d5d6" stroke="#4a4e50" /></Svg>
        </Tool>
        <Tool label="Isolated layers" active>
          <Svg><path d="M6 6.500h13l-5 7H1z" fill="#8fd6f5" stroke="#2f84ad" /><path d="M1 6V1h5M14 1h5v5M19 14v5h-5M6 19H1v-5M8 1h4M8 19h4" stroke="#17628d" strokeWidth="1.500" strokeDasharray="3 1" /></Svg>
        </Tool>
        <Tool label="Hidden solid layers" active>
          <Svg><path d="M6 5h13l-5 6H1z" fill="#e3e4e5" stroke="#b1b4b6" /><path d="M10 12h7v7h-7zM10 12l2-2h7l-2 2M19 10v7l-2 2" fill="#d3d5d6" stroke="#a9adaf" /></Svg>
        </Tool>
        <Tool label="Hidden layers" active><Svg><LayersPart top="#fff" line="#77797b" /></Svg></Tool>
        <Tool label="Nested layers" active><Svg><LayersPart top="#f2cd83" line="#a8853c" /></Svg></Tool>
        <Tool label="More layer tools" width="w-6"><span className="text-lg leading-5 font-semibold">»</span></Tool>
        <Tool label="Layer properties">
          <Svg><LayersPart /><path d="M10.500 9.500h8v10h-8z" fill="#fff" stroke="#85898b" /><path d="M12 12h5M12 14.500h5M12 17h5" stroke="#85898b" strokeDasharray="1 1" /><Corner /></Svg>
        </Tool>
        <Tool label="Layer settings" width="ml-[2px] w-[30px]">{docMenuIcon}</Tool>
      </div>
      <div className="mr-[6px] ml-[10px] flex h-[30px] shrink-0 border border-[#cccfd0] bg-[#f7f7f8]">
        <button type="button" aria-label="Pick object" disabled className="flex w-[30px] items-center justify-center border-r border-[#cccfd0] bg-[#eceef0]">
          <Svg><path d="M5 2v14l3.500-3 2.500 6 2.500-1-2.500-6H16z" fill="#f7f7f8" stroke="#a3a6a8" strokeWidth="1.300" /></Svg>
        </button>
        <div className="relative flex-1">
          <select aria-label="Active object" disabled className="h-full w-full appearance-none pl-2 text-[14px] text-[#b5b8ba]">
            <option>CONNECTING_ROD.PRT</option>
          </select>
          <span className="pointer-events-none absolute inset-y-0 right-0 flex w-[19px] items-center justify-center border-l border-[#cccfd0]"><Caret className="text-[#a3a6a8]" /></span>
        </div>
      </div>
      <ul className="min-h-0 flex-1 overflow-hidden text-[14px]">
        <li className="flex h-[26px] items-center gap-[11px] pl-[13px]"><Svg><LayersPart /></Svg>Layers</li>
        {layerItems.map(item => <TreeRow key={item.name} item={item} tall />)}
      </ul>
    </aside>
  );
};

/* ---------- graphics area ---------- */

const datumPlanes = [
  '236,80 552,660 460,1070 145,492',
  '808,102 938,468 846,880 715,515',
  '1060,102 1190,468 1098,878 967,513',
  '1517,154 1448,466 1249,743 1321,427',
  '60,307 1483,307 1615,673 190,673',
  '172,285 1595,285 1503,696 80,696',
];

const ConnectingRod = () => (
  <svg x="780" y="430" width="720" height="370" viewBox="0 0 1568 1110" preserveAspectRatio="none">
    <defs>
      <linearGradient id="top" gradientUnits="userSpaceOnUse" x1="100" y1="0" x2="1600" y2="100">
        <stop stopColor="#34546a" /><stop offset=".03" stopColor="#44687f" /><stop offset=".08" stopColor="#4c728d" />
        <stop offset=".83" stopColor="#4c728d" /><stop offset=".91" stopColor="#375a70" /><stop offset=".97" stopColor="#1e3442" />
      </linearGradient>
      <linearGradient id="pocket" gradientUnits="userSpaceOnUse" x1="400" y1="690" x2="560" y2="640">
        <stop stopColor="#1e3340" /><stop offset=".5" stopColor="#293f50" /><stop offset="1" stopColor="#2d4656" />
      </linearGradient>
      <linearGradient id="bore" x2="1" y2=".35">
        <stop stopColor="#7d7978" /><stop offset=".3" stopColor="#cdc8c7" /><stop offset=".6" stopColor="#dedada" /><stop offset=".85" stopColor="#e2dedd" /><stop offset="1" stopColor="#a8a4a3" />
      </linearGradient>
    </defs>
    <g fill="#dfdfe0">
      {datumPlanes.map(points => <polygon key={points} points={points} />)}
    </g>
    <path
      fill="url(#top)"
      d="M80 640C80 610 84 600 90 575L173 210C185 160 225 138 280 138L457 134C458 190 475 222 495 237C510 250 525 254 550 254L1015 246C1060 245 1105 215 1136 171L1340 167C1430 175 1510 235 1568 310L1545 610L1517 740C1500 790 1440 815 1380 814L1300 620L300 620Z"
    />
    <path d="M457 134L492 236C465 210 455 175 457 134Z" fill="#20323f" />
    <path
      fill="#2d4656"
      d="M80 640C82 575 120 532 190 532L368 528C400 465 450 405 520 403L985 396C1030 396 1060 430 1068 465L1270 463C1400 470 1505 570 1514 665C1530 765 1450 815 1380 814L1190 810C1182 765 1150 735 1100 734L630 727C560 728 525 775 482 847L300 843C180 838 84 735 80 640Z"
    />
    <path d="M368 528C400 465 450 405 520 403L600 402L640 727C560 728 525 775 482 847Z" fill="url(#pocket)" />
    <path d="M985 396C1030 396 1060 430 1068 465L1085 560C1050 490 1030 440 985 396Z" fill="#2c4560" opacity=".7" />
    <path d="M440 640Q480 570 540 568L1050 570Q1120 590 1130 734L630 727Q560 728 510 790Z" fill="#4a4350" opacity=".2" />
    <path d="M146 660C148 610 180 590 220 590C290 592 366 650 368 715C368 760 335 786 290 786C220 784 146 725 146 660Z" fill="url(#bore)" />
    <path d="M334 665L310 783C345 780 368 760 368 715Q360 680 334 665Z" fill="#efedec" opacity=".35" />
    <path d="M1198 605C1200 560 1235 531 1285 531C1370 535 1440 600 1442 665C1442 715 1405 746 1355 746C1270 742 1198 680 1198 605Z" fill="url(#bore)" />
    <path d="M1285 531C1350 535 1390 565 1415 598Q1340 595 1270 572Z" fill="#cfbfc2" opacity=".6" />
    <path d="M171 365C178 310 210 274 238 275C262 277 271 300 270 325C262 370 230 399 200 399C180 398 170 385 171 365Z" fill="#8f8a88" />
    <path d="M215 392C222 355 245 335 268 333C262 370 235 392 215 392Z" fill="#786d70" />
    <path d="M1399 355C1400 325 1418 310 1437 311C1465 315 1480 345 1481 385C1480 410 1470 424 1452 423C1425 418 1400 390 1399 355Z" fill="url(#bore)" />
    <path d="M1399 360C1420 360 1442 385 1446 422C1420 412 1400 390 1399 360Z" fill="#d8d0d3" />
    <g fill="#8a5560" fillOpacity=".015" stroke="#7d4b54">
      {datumPlanes.map(points => <polygon key={points} points={points} vectorEffect="non-scaling-stroke" />)}
    </g>
    <g strokeWidth="2">
      <path d="M868 576L851 530" stroke="#35e83a" vectorEffect="non-scaling-stroke" />
      <path d="M868 576H912" stroke="#a8383f" vectorEffect="non-scaling-stroke" />
      <path d="M868 576L854 634" stroke="#35dbe8" vectorEffect="non-scaling-stroke" />
    </g>
    <path d="M845 520h13v19h-13z" fill="#2cfb2f" />
    <path d="M911 570h11v12h-11z" fill="#fb2f35" />
    <path d="M849 627h11v15h-11z" fill="#2cf3fb" />
  </svg>
);

const ViewToolbar = () => (
  <div role="toolbar" aria-label="Graphics" className="absolute top-[7px] left-1/2 flex h-[38px] -translate-x-1/2 items-center gap-[2px] border border-[#b0bfbf] bg-white pr-[3px] pl-1">
    <Tool label="Refit"><Svg><path d="M1.500 1.500h17v17h-17z" fill="#f7f8f9" stroke="#a3a6a8" /><g transform="translate(3 3) scale(.85)"><LensPart /></g></Svg></Tool>
    <Tool label="Zoom in"><Svg><LensPart sign="M4 7.500h8M8 3.500v8" /></Svg></Tool>
    <Tool label="Zoom out"><Svg><LensPart sign="M4 7.500h8" /></Svg></Tool>
    <Tool label="Repaint"><Svg><path d="M1 1h18v18H1z" fill="#8fd0ea" stroke="#85898b" /><path d="M1 2h18" stroke="#85898b" strokeWidth="3" /><path d="M1.500 4h17L7 16q-4 2-5.500 2z" fill="#eef9fd" /><path d="M6 15L17 6" stroke="#17547b" strokeWidth="2" /></Svg></Tool>
    <Tool label="Rendering"><Svg><path d="M12 2l7-1v9l-6 4-5-4z" fill="#85898b" /><circle cx="12" cy="6" r="4" fill="#c3c5c7" /><circle cx="6" cy="13" r="5.500" fill="#b5b8ba" /><circle cx="5" cy="11" r="3" fill="#ececec" /><Corner /></Svg></Tool>
    <Tool label="Display style"><Svg><CubePart front="#dff5fd" top="#a5e3fb" side="#8dd3f0" line="#57aacf" /><Corner /></Svg></Tool>
    <Tool label="Saved orientations"><Svg><g stroke="#3f8fb5"><path d="M5 1h9l-3 8H1z" fill="#e1f6fe" /><path d="M1 9h10l3 8H5z" fill="#9ad5ec" /><path d="M14 1l5 8-5 8-3-8z" fill="#5aa4c6" /></g><path d="M12.500 10.500h6v8h-6z" fill="#fff" stroke="#85898b" /><path d="M14 13h3M14 16h3" stroke="#4a4e50" /><Corner /></Svg></Tool>
    <Tool label="View manager"><Svg><TableCamPart /></Svg></Tool>
    <Tool label="Perspective"><Svg><PerspPart /></Svg></Tool>
    <Tool label="Section"><Svg><ClipPart /><Corner /></Svg></Tool>
    <Tool label="Datum display"><Svg><path d="M1 1l5 5m0-5L1 6" stroke={BROWN} strokeWidth="1.600" /><path d="M12 1L5 19" stroke={BROWN} strokeWidth="1.800" strokeDasharray="4 2" /><path d="M12 8v6h7M12 14l-3 4" stroke={BROWN} strokeWidth="1.700" /><Corner /></Svg></Tool>
    <Tool label="Annotations" active><Svg><AnnotPart /><EyePart /></Svg></Tool>
    <Tool label="Spin center" active><Svg><TrioPart /></Svg></Tool>
    <Tool label="Simulate"><Svg><path d="M10 2l8 15H2z" stroke="#a9adaf" strokeWidth="3" fill="#f3f3f3" /><circle cx="15.500" cy="15" r="4" fill="#c9cbcc" /><path d="M14 13l4 2-4 2z" fill="#fff" /></Svg></Tool>
    <Tool label="Pause"><Svg><path d="M4 3h4v14H4zM12 3h4v14h-4z" fill="#a3a6a8" /></Svg></Tool>
    <Tool label="Results"><Svg><path d="M1 4h18v13H1q9-3 5-9z" fill="#c3c5c7" /><path d="M12 4h7v13h-7q5-6 0-13z" fill="#dedfe0" /></Svg></Tool>
  </div>
);

/* ---------- view manager dialog ---------- */

const states = ['Layer_State001', 'Layer_State002', 'Layer_State003'];

const DialogTab: React.FC<{ label: string; width: string; selected?: boolean }> = ({ label, width, selected }) => (
  <button
    type="button"
    role="tab"
    aria-selected={!!selected}
    className={`h-[29px] border-[#c6c8cb] ${width} ${selected ? 'bg-[#fbfbfb] text-[#33383a]' : 'border-b text-[#85898d]'}`}
  >
    {label}
  </button>
);

const ViewManager = () => {
  const [active, setActive] = useState(states[0]);
  return (
    <div role="dialog" aria-label="View Manager" className="absolute top-[12px] right-0 flex w-[432px] flex-col rounded-[10px] border border-[#b3b6b9] bg-[#eff0f2] p-px text-[15px] text-[#4a4e50] shadow-[0_8px_40px_12px_rgba(60,60,70,0.22)]">
      <div className="relative flex h-9 items-center justify-center rounded-t-[9px] bg-[#dcdddf] text-[#2f3436]">
        View Manager
        <button type="button" aria-label="Close dialog" className="absolute right-3">
          <Svg size="size-3"><path d="M2 2l16 16M18 2L2 18" stroke="#77797b" strokeWidth="5" /></Svg>
        </button>
      </div>
      <div className="mt-[3px] flex flex-col border border-[#c6c8cb] bg-[#fbfbfb]">
        <div role="tablist" className="bg-[#eff0f2]">
          <div className="flex">
            <DialogTab label="Orient" width="w-[137px] border-r" />
            <DialogTab label="Appearance" width="w-[176px] border-r" />
            <DialogTab label="All" width="flex-1" />
          </div>
          <div className="flex">
            <DialogTab label="Simp Rep" width="w-[153px] border-r" />
            <DialogTab label="Sections" width="w-[145px] border-r-2" />
            <DialogTab label="Layers" width="flex-1" selected />
          </div>
        </div>
        <div className="mt-[9px] mb-[10px] flex h-[35px] pl-1">
          <button type="button" className="w-[54px] border border-[#66c7fb] bg-[#9fdfff]">New</button>
          <button type="button" className="ml-24 flex w-[67px] items-center justify-between border border-[#a9adaf] bg-[#f9f9f9] pr-1 pl-[11px]">Edit<Caret /></button>
          <button type="button" className="ml-1 flex w-[123px] items-center border border-[#a9adaf] bg-[#f9f9f9] pr-1 pl-[14px]">
            <EyeIcon /><span className="ml-[6px] flex-1 text-left">Options</span><Caret />
          </button>
        </div>
        <div className="mx-[3px] h-[273px] border border-[#a9adaf] bg-white p-px text-[14px]">
          <table className="w-full table-fixed">
            <thead className="bg-[#fbfbfb]">
              <tr className="h-[27px] border-b border-[#cccfd0]">
                <th className="w-[166px] border-r border-[#cccfd0] p-0 pt-1 text-[15px] leading-5 font-normal text-[#2f3436]">Names</th>
                <th className="border-r border-[#cccfd0] p-0" aria-label="Status" />
              </tr>
            </thead>
            <tbody>
              {states.map(name => (
                <tr key={name} className="h-7 cursor-default" onClick={() => setActive(name)}>
                  <td className={`p-0 pl-[3px] ${name === active ? 'bg-[#ade3ff] text-[#2b3033]' : ''}`}>
                    <span className="flex items-center">
                      {name === active && (
                        <svg className="mr-1 ml-[3px] h-4 w-[14px]" viewBox="0 0 14 16"><path d="M1 5h6V1l6.500 7L7 15v-4H1z" fill="#1d8a17" stroke="#8fc73e" /></svg>
                      )}
                      {name}
                    </span>
                  </td>
                  <td />
                </tr>
              ))}
            </tbody>
          </table>
        </div>
      </div>
      <div className="mx-[6px] mt-[3px] flex justify-end border-t border-[#b9bcbf] pt-[2px] pb-[3px]">
        <button type="button" className="h-[30px] w-[60px] border border-[#a9adaf] bg-[#f9f9f9]">Close</button>
      </div>
      {/* pointer */}
      <svg className="pointer-events-none absolute top-[294px] left-[148px] h-5 w-[13px]" viewBox="0 0 13 20"><path d="M.7 1v15.500l3.600-3.400 2.500 5.900 2.500-1-2.500-5.800h5z" fill="#fff" stroke="#222" /></svg>
    </div>
  );
};

const Viewport = () => (
  <main className="relative min-w-0 flex-1 overflow-hidden bg-[#e9eaed]">
    <svg className="h-full w-full" viewBox="434 205 1486 834" preserveAspectRatio="xMidYMid meet" role="img" aria-label="Connecting rod model">
      <ConnectingRod />
    </svg>
    <p className="absolute bottom-[57px] left-4 font-['Liberation_Sans',Arial,sans-serif] text-[16px] leading-6 text-[#959ba1]">Layer State:LAYER_STATE001</p>
    <ViewToolbar />
    <ViewManager />
  </main>
);

/* ---------- status bar ---------- */

const StatusBar = () => (
  <footer className="flex h-[41px] shrink-0 items-center border-t border-[#b0b8ba] bg-white text-[#4a4e50]">
    <Tool label="Toggle navigator" active width="ml-[7px] w-[26px]">
      <Svg><path d="M1 2h18v16H1z" fill="#f3f4f5" stroke="#9a9ea0" /><path d="M1 5h18" stroke="#9a9ea0" /><path d="M1.500 7.500h5v11h-5z" fill="#d8f2fc" stroke="#1f7099" strokeWidth="1.500" /><EyePart /></Svg>
    </Tool>
    <Tool label="Web browser" width="ml-[2px] w-[30px]">
      <Svg><circle cx="10" cy="10" r="8.500" fill="#2f9fd8" /><path d="M4 7q4-5 8-1t-3 4-3 3zM11 11q4-3 6 0t-5 6z" fill="#c9effd" /><path d="M2 18C-1 13 9 2 18 1c3 1-3 12-16 17z" stroke="#5f6467" strokeWidth="1.100" /></Svg>
    </Tool>
    <Tool label="Full screen"><Svg><rect x="1" y="1" width="18" height="18" fill="#e4eef3" stroke="#2f7ba0" strokeWidth="1.600" /></Svg></Tool>
    <div className={`${SEP} ml-2 h-[30px]`} />
    <p className="flex items-center text-[13px]"><span className="mr-[6px] mb-[3px] ml-[7px] size-[6px] rounded-full bg-[#17628d]" />Layer statuses changed successfully. Repaint to see the results.</p>
    <div className="ml-auto flex items-center text-[14px]">
      <div className={`${SEP} h-[30px]`} />
      <div className={`${SEP} ml-1 h-[30px]`} />
      <div className="ml-[2px] flex h-[30px] border border-[#c3c7c9]">
        <button type="button" aria-label="Find" className="flex w-8 items-center justify-center bg-[#f9f9f9]">
          <Svg>
            <path d="M4 1h4v4H4zM12 1h4v4h-4z" fill="#333" /><path d="M3 5h6v8l-2 6H0v-4zM11 5h6l3 10v4h-7l-2-6z" fill="#444" />
            <path d="M3 7h2l-2 9H1zM13 7h2l2 9h-2z" fill="#aaa" /><path d="M8 6h4v5H8z" fill="#222" />
          </Svg>
        </button>
        <button type="button" aria-label="Find list" className="flex w-[18px] items-center justify-center border-l border-[#c3c7c9] bg-[#f9f9f9]"><Caret /></button>
      </div>
      <div className={`${SEP} ml-[2px] h-[30px]`} />
      <span className="ml-1 w-[115px]">1 selected</span>
      <div className="relative mr-5 h-7 w-[218px] border border-[#a3a8aa] bg-[#f7f7f8]">
        <select aria-label="Selection filter" className="h-full w-full appearance-none pl-2">
          <option>Geometry</option>
          <option>Datums</option>
        </select>
        <span className="pointer-events-none absolute inset-y-0 right-0 flex w-5 items-center justify-center border-l border-[#a3a8aa]"><Caret /></span>
      </div>
    </div>
  </footer>
);

const App = () => (
  <div className="flex h-screen flex-col overflow-hidden bg-white font-['Open_Sans','Noto_Sans',sans-serif]">
    <TitleBar />
    <MenuBar />
    <Ribbon />
    <div className="flex min-h-0 flex-1">
      <Navigator />
      <Viewport />
    </div>
    <StatusBar />
  </div>
);

export default App;
